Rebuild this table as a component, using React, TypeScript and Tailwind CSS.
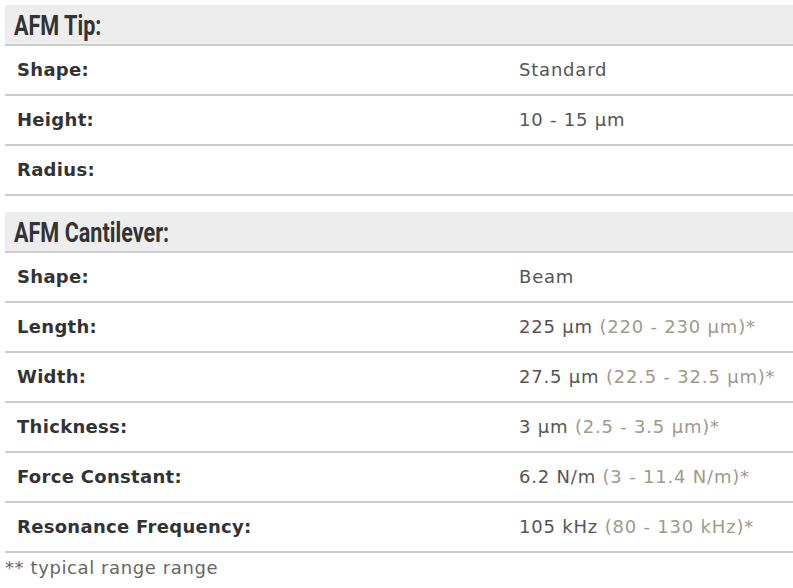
const tip = [
  { label: "Shape:", value: "Standard" },
  { label: "Height:", value: "10 - 15 µm" },
  { label: "Radius:", value: "" },
];

const cantilever = [
  { label: "Shape:", value: "Beam" },
  { label: "Length:", value: "225 µm", range: "(220 - 230 µm)*" },
  { label: "Width:", value: "27.5 µm", range: "(22.5 - 32.5 µm)*" },
  { label: "Thickness:", value: "3 µm", range: "(2.5 - 3.5 µm)*" },
  { label: "Force Constant:", value: "6.2 N/m", range: "(3 - 11.4 N/m)*" },
  { label: "Resonance Frequency:", value: "105 kHz", range: "(80 - 130 kHz)*" },
];

type Row = { label: string; value: string; range?: string };

function SpecTable({ title, rows }: { title: string; rows: Row[] }) {
  return (
    <div>
      <h2 className="h-[41px] border-b-2 border-[#cccccc] bg-[#ededed] pl-[9px] pt-[6px] text-[#333333]">
        <span className="inline-block origin-left scale-x-[0.8] font-['Roboto',sans-serif] text-[27px] leading-[30px] font-bold">
          {title}
        </span>
      </h2>
      {rows.map((r) => (
        <div
          key={r.label}
          className="flex h-[50px] items-center border-b-2 border-[#cccccc] pb-[1px] text-[18px]"
        >
          <div className="w-[514px] pl-[12px] font-bold tracking-[0.3px] text-[#333333]">{r.label}</div>
          <div className="tracking-[0.8px] text-[#555555]">
            {r.value}
            {r.range && <span className="text-[#a09a8b]"> {r.range}</span>}
          </div>
        </div>
      ))}
    </div>
  );
}

export default function App() {
  return (
    <div className="min-h-[588px] bg-white pl-[5px] pt-[5px] font-['DejaVu_Sans',Verdana,sans-serif]">
      <SpecTable title="AFM Tip:" rows={tip} />
      <div className="h-[16px]" />
      <SpecTable title="AFM Cantilever:" rows={cantilever} />
      <p className="pt-[2px] text-[18px] leading-[26px] tracking-[0.6px] text-[#666666]">** typical range range</p>
    </div>
  );
}
